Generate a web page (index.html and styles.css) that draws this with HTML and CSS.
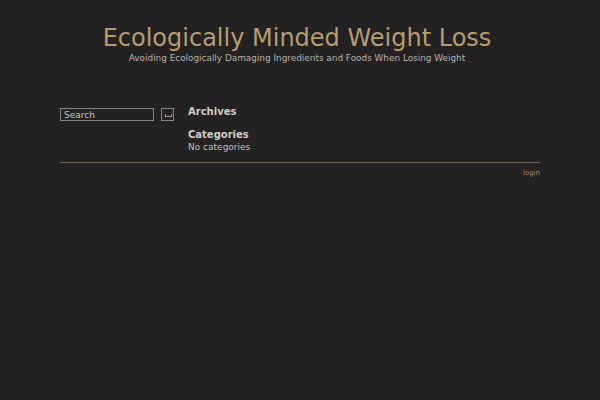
FILE: index.html
```html
<!DOCTYPE html>
<html>
<head>
<meta charset="utf-8">
<link rel="stylesheet" href="styles.css">
</head>
<body>
<div class="page">
  <header class="header">
    <h1 class="title">Ecologically Minded Weight Loss</h1>
    <p class="tagline">Avoiding Ecologically Damaging Ingredients and Foods When Losing Weight</p>
  </header>
  <div class="main">
    <div class="search">
      <input class="search-input" type="text" value="Search">
      <button class="search-btn"><span class="btn-glyph"></span></button>
    </div>
    <div class="widgets">
      <h2 class="widget-title">Archives</h2>
      <h2 class="widget-title cat">Categories</h2>
      <p class="widget-text">No categories</p>
    </div>
  </div>
  <footer class="footer">
    <a class="login">login</a>
  </footer>
</div>
</body>
</html>
```

FILE: styles.css
```css
html, body {
  margin: 0;
  padding: 0;
  background: #232122;
  font-family: "DejaVu Sans", sans-serif;
}
.page {
  width: 480px;
  margin: 0 auto;
}
.header {
  text-align: center;
  padding-top: 24px;
  padding-right: 6px;
}
.title {
  margin: 0;
  font-weight: normal;
  font-size: 24px;
  line-height: 28px;
  color: #b59e6e;
}
.tagline {
  margin: 0;
  font-size: 8.9px;
  line-height: 12px;
  color: #b8b3a8;
}
.main {
  display: flex;
  margin-top: 42px;
  padding-bottom: 9px;
  border-bottom: 1px solid #6e6548;
}
.search {
  display: flex;
  align-items: flex-start;
  gap: 7px;
  width: 128px;
  padding-top: 2px;
}
.search-input {
  box-sizing: border-box;
  width: 94px;
  height: 13px;
  margin: 0;
  padding: 0 3px;
  background: #232122;
  border: 1px solid #8a8780;
  color: #c6c2b9;
  font-family: "DejaVu Sans", sans-serif;
  font-size: 9px;
  line-height: 11px;
}
.search-btn {
  box-sizing: border-box;
  width: 13px;
  height: 13px;
  margin: 0;
  padding: 0;
  background: #232122;
  border: 1px solid #8a8780;
  position: relative;
}
.btn-glyph {
  position: absolute;
  left: 3px;
  bottom: 3px;
  width: 5px;
  height: 2px;
  border: 1px solid #9a968e;
  border-top: none;
}
.widgets {
  display: flex;
  flex-direction: column;
}
.widget-title {
  margin: 0;
  font-size: 10px;
  line-height: 12px;
  font-weight: bold;
  color: #d2cec6;
}
.widget-title.cat {
  margin-top: 11px;
}
.widget-text {
  margin: 0;
  font-size: 9px;
  line-height: 12px;
  color: #c6c2b9;
}
.footer {
  display: flex;
  justify-content: flex-end;
  padding-top: 5px;
}
.login {
  font-size: 7px;
  line-height: 10px;
  color: #a08c66;
}
```
